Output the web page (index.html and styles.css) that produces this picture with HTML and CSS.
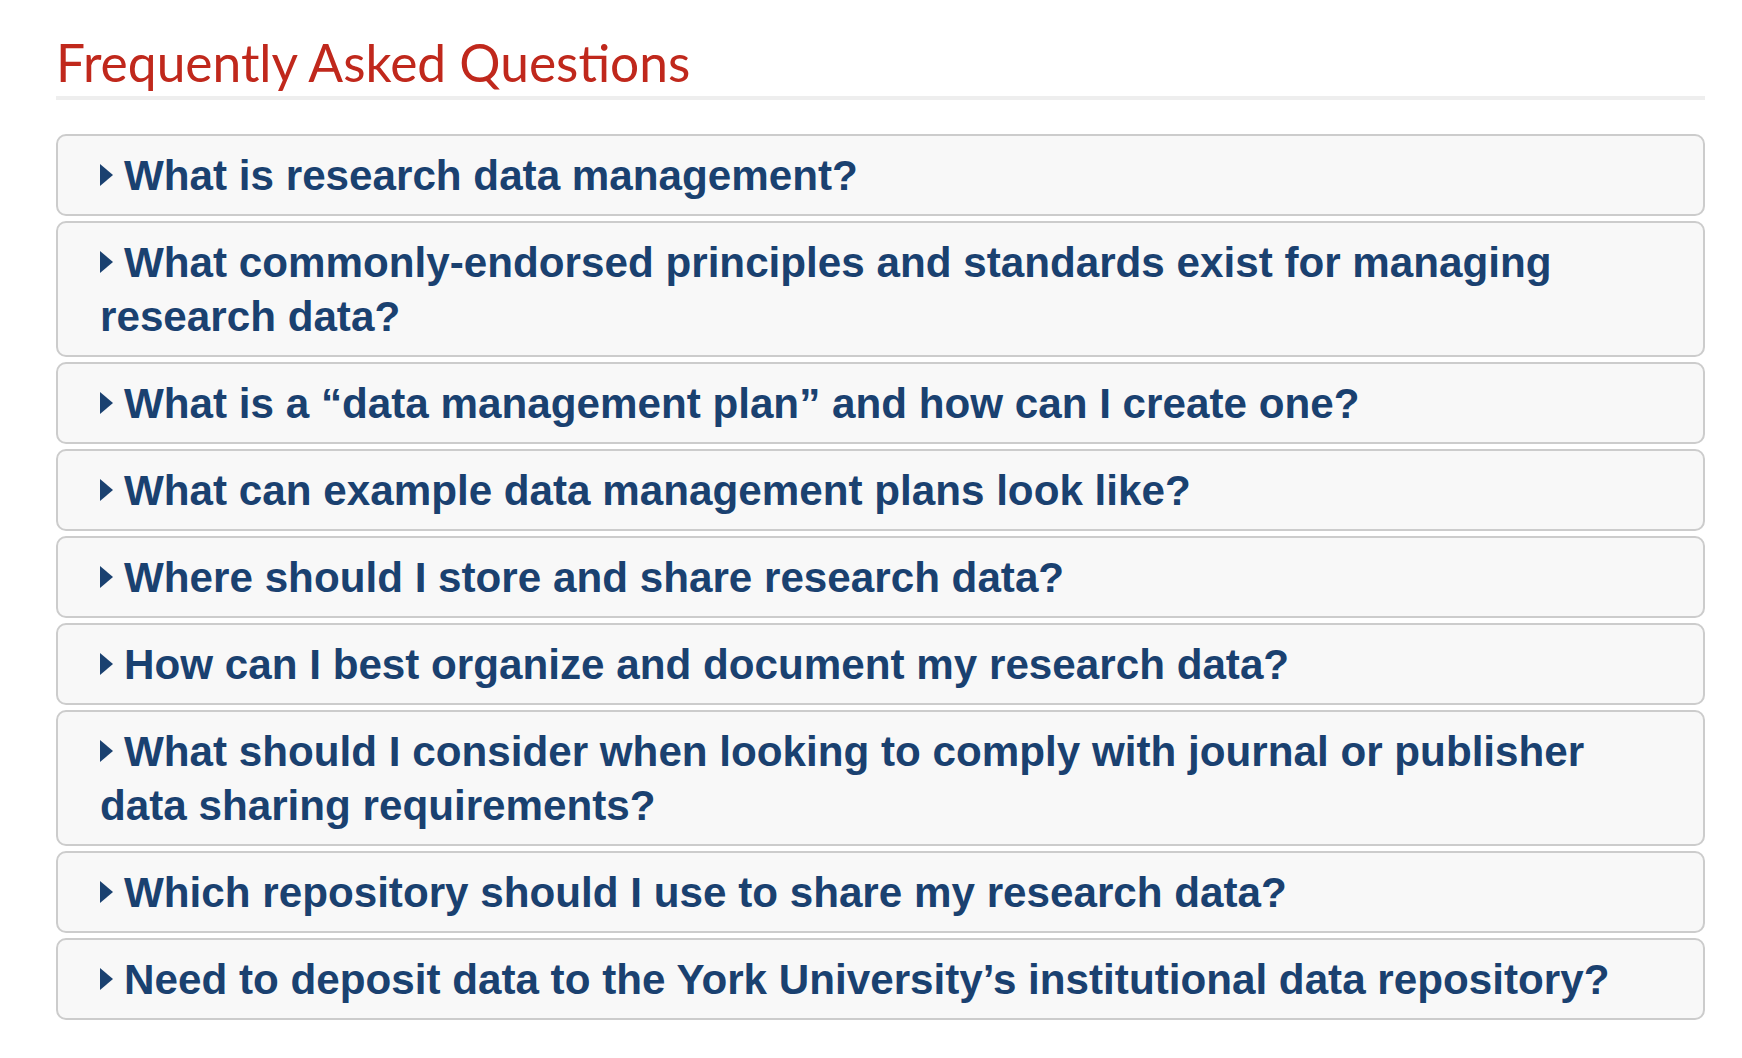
FILE: index.html
```html
<!DOCTYPE html>
<html lang="en">
<head>
<meta charset="utf-8">
<title>Frequently Asked Questions</title>
<link rel="stylesheet" href="styles.css">
</head>
<body>
<main class="faq">
  <h2 class="faq-title">Frequently Asked Questions</h2>
  <div class="faq-list">
    <details class="faq-item"><summary class="faq-q"><span class="caret"></span>What is research data management?</summary></details>
    <details class="faq-item"><summary class="faq-q"><span class="caret"></span>What commonly-endorsed principles and standards exist for managing research data?</summary></details>
    <details class="faq-item"><summary class="faq-q"><span class="caret"></span>What is a “data management plan” and how can I create one?</summary></details>
    <details class="faq-item"><summary class="faq-q"><span class="caret"></span>What can example data management plans look like?</summary></details>
    <details class="faq-item"><summary class="faq-q"><span class="caret"></span>Where should I store and share research data?</summary></details>
    <details class="faq-item"><summary class="faq-q"><span class="caret"></span>How can I best organize and document my research data?</summary></details>
    <details class="faq-item"><summary class="faq-q"><span class="caret"></span>What should I consider when looking to comply with journal or publisher data sharing requirements?</summary></details>
    <details class="faq-item"><summary class="faq-q"><span class="caret"></span>Which repository should I use to share my research data?</summary></details>
    <details class="faq-item"><summary class="faq-q"><span class="caret"></span>Need to deposit data to the York University’s institutional data repository?</summary></details>
  </div>
</main>
</body>
</html>
```

FILE: styles.css
```css
html, body {
  margin: 0;
  padding: 0;
  background: #ffffff;
}

.faq {
  width: 1649px;
  margin-left: 56px;
  padding-top: 30px;
}

.faq-title {
  font-family: Lato, "Open Sans", sans-serif;
  font-weight: 400;
  font-size: 51.5px;
  line-height: 64px;
  color: #c0281c;
  margin: 0;
  padding-bottom: 2px;
  border-bottom: 4px solid #eeeeee;
}

.faq-list {
  margin-top: 34px;
  display: flex;
  flex-direction: column;
  gap: 5px;
}

.faq-item {
  background: #f8f8f8;
  border: 2px solid #cccccc;
  border-radius: 10px;
}

.faq-q {
  list-style: none;
  display: block;
  padding: 13px 40px 11px 42px;
  font-family: "Liberation Sans", Arial, sans-serif;
  font-weight: 700;
  font-size: 42.2px;
  line-height: 54px;
  color: #1a4170;
  cursor: pointer;
}

.faq-q::-webkit-details-marker {
  display: none;
}

.caret {
  display: inline-block;
  width: 0;
  height: 0;
  border-top: 11px solid transparent;
  border-bottom: 11px solid transparent;
  border-left: 13px solid #1a4170;
  margin-right: 11px;
  vertical-align: 4px;
}
```
